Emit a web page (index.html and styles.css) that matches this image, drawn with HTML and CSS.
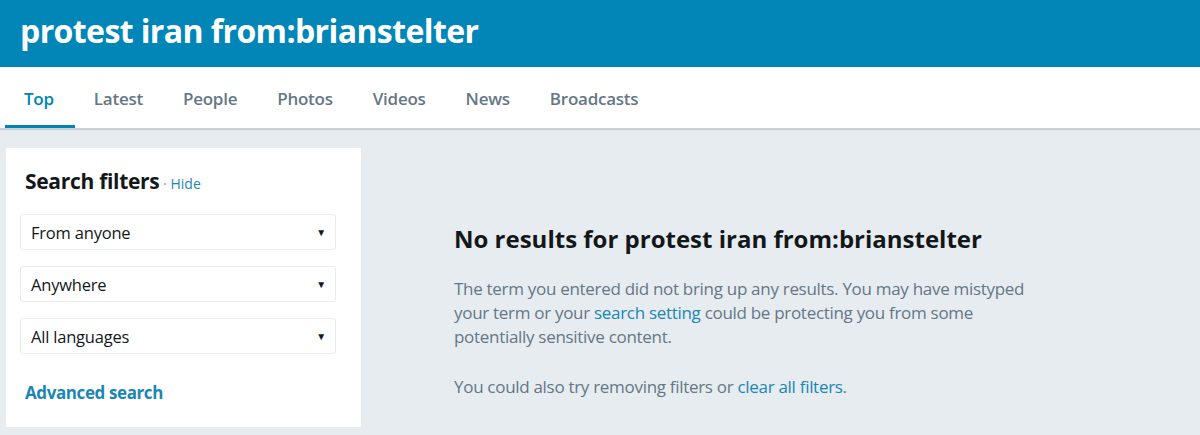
FILE: index.html
```html
<!DOCTYPE html>
<html>
<head>
<meta charset="utf-8">
<link rel="stylesheet" href="styles.css">
</head>
<body>
<header class="hero">
  <h1 class="hero-title">protest iran from:brianstelter</h1>
</header>
<nav class="tabs">
  <a class="tab active">Top</a>
  <a class="tab">Latest</a>
  <a class="tab">People</a>
  <a class="tab">Photos</a>
  <a class="tab">Videos</a>
  <a class="tab">News</a>
  <a class="tab">Broadcasts</a>
</nav>
<div class="content">
  <aside class="filters">
    <h2 class="filters-title">Search filters<span class="hide"> · <a>Hide</a></span></h2>
    <div class="select"><span>From anyone</span><span class="caret">▼</span></div>
    <div class="select"><span>Anywhere</span><span class="caret">▼</span></div>
    <div class="select"><span>All languages</span><span class="caret">▼</span></div>
    <a class="advanced">Advanced search</a>
  </aside>
  <main class="empty">
    <h2 class="empty-title">No results for protest iran from:brianstelter</h2>
    <p class="empty-text">The term you entered did not bring up any results. You may have mistyped your term or your <a>search setting</a> could be protecting you from some potentially sensitive content.</p>
    <p class="empty-text">You could also try removing filters or <a>clear all filters</a>.</p>
  </main>
</div>
</body>
</html>
```
FILE: styles.css
```css
* { box-sizing: border-box; }
html, body { margin: 0; padding: 0; }
body {
  width: 1200px;
  height: 435px;
  overflow: hidden;
  background: #e6ecf0;
  font-family: "Open Sans", "Noto Sans", sans-serif;
  color: #14171a;
}
a { color: #1b86b5; text-decoration: none; }

.hero {
  background: #0286b8;
  height: 67px;
  padding: 0 20px;
  display: flex;
  align-items: center;
}
.hero-title {
  margin: 0;
  margin-top: -6px;
  color: #fff;
  font-size: 32px;
  font-weight: 700;
  letter-spacing: -0.6px;
}

.tabs {
  background: #fff;
  height: 61px;
  display: flex;
  padding-left: 5px;
  box-shadow: 0 2px 1px rgba(0,0,0,0.12);
  position: relative;
}
.tab {
  display: flex;
  align-items: center;
  padding: 5px 21px 0 19px;
  font-size: 17px;
  font-weight: 600;
  color: #657786;
  letter-spacing: -0.25px;
  height: 100%;
  border-bottom: 3px solid transparent;
}
.tab.active {
  color: #0084b4;
  border-bottom-color: #0084b4;
}

.content {
  display: flex;
  padding: 20px 0 0 6px;
  gap: 93px;
}
.filters {
  background: #fff;
  width: 355px;
  height: 279px;
  padding: 20px 25px 0 14px;
  display: flex;
  flex-direction: column;
}
.filters-title {
  margin: 0 0 17px 5px;
  font-size: 21px;
  font-weight: 700;
  letter-spacing: -0.3px;
  line-height: 26px;
}
.hide {
  font-size: 14px;
  font-weight: 400;
  color: #8899a6;
  letter-spacing: 0;
}
.select {
  height: 36px;
  border: 1px solid #e6ecf0;
  border-radius: 3px;
  display: flex;
  align-items: center;
  justify-content: space-between;
  padding: 0 9px 0 10px;
  font-size: 16.5px;
  color: #14171a;
  margin-bottom: 16px;
  letter-spacing: -0.2px;
}
.caret { font-size: 10px; color: #14171a; }
.advanced {
  margin: 11px 0 0 5px;
  font-size: 17px;
  font-weight: 700;
  letter-spacing: -0.4px;
}

.empty {
  width: 600px;
  padding-top: 76px;
}
.empty-title {
  margin: 0 0 23px;
  font-size: 24px;
  font-weight: 700;
  letter-spacing: 0;
  line-height: 30px;
}
.empty-text {
  margin: 0 0 26px;
  font-size: 17px;
  line-height: 24px;
  color: #657786;
  letter-spacing: -0.3px;
  width: 590px;
}
```
